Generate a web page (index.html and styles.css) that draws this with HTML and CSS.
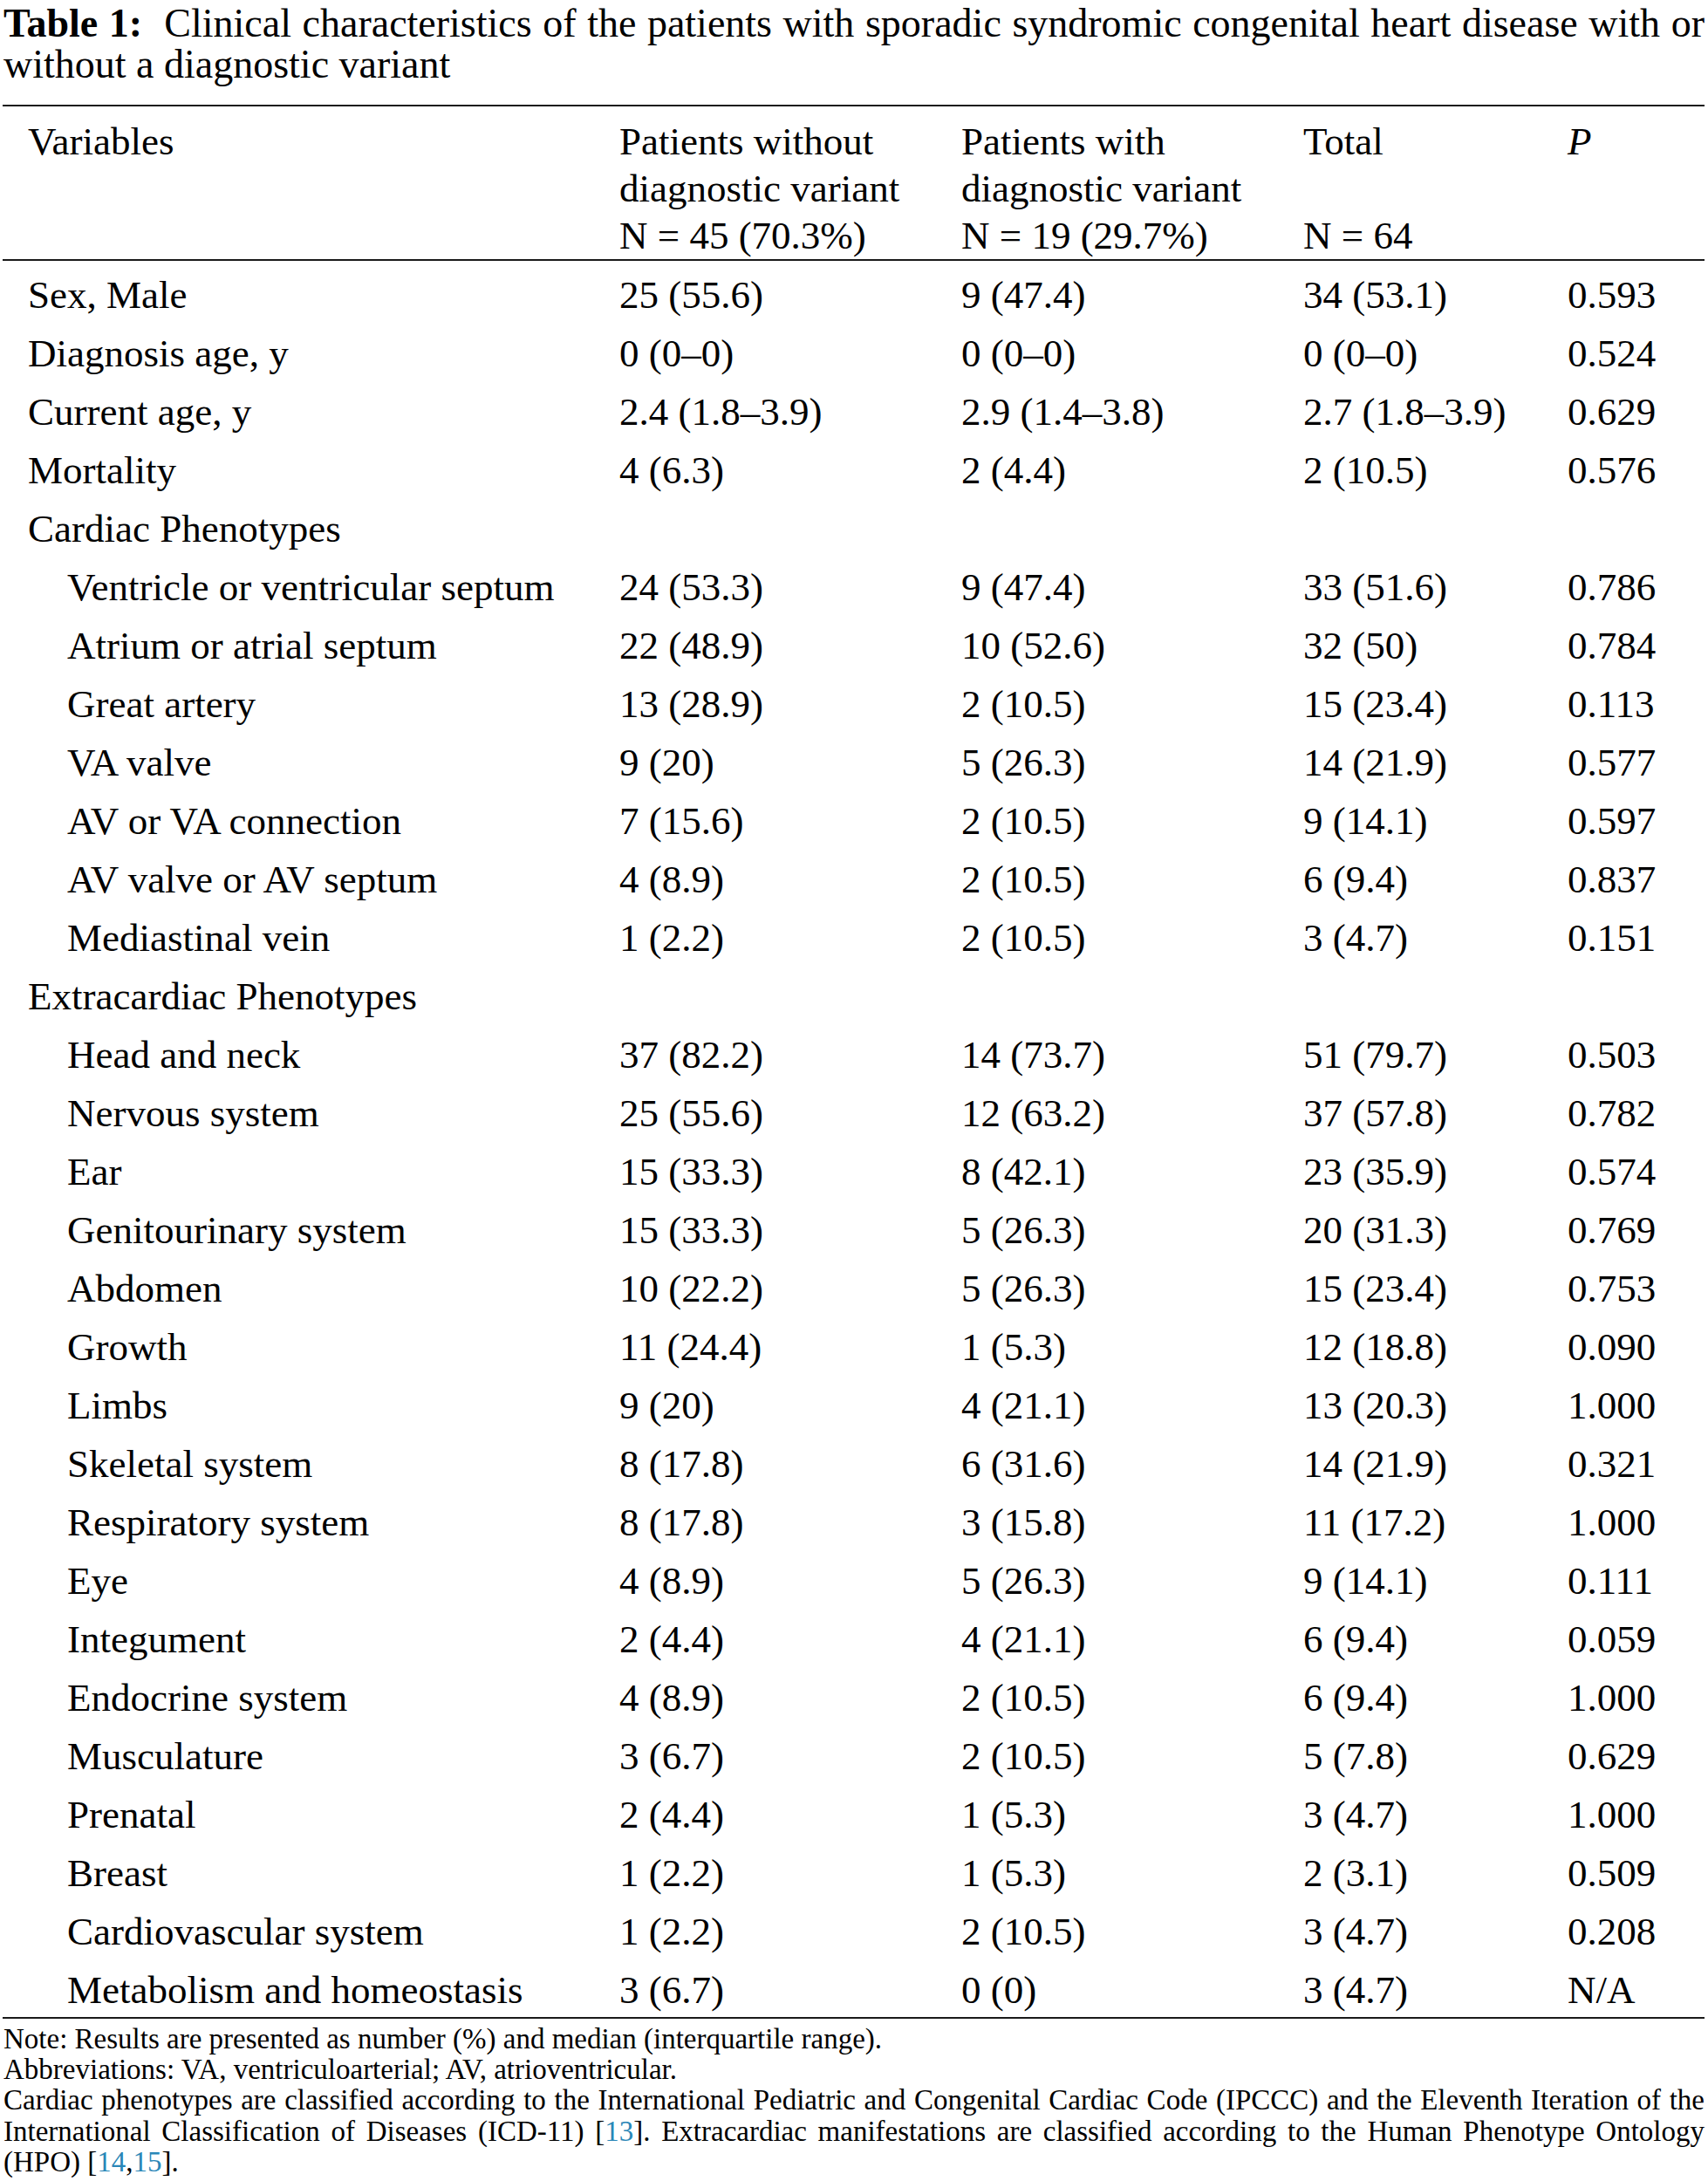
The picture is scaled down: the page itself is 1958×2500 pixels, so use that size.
FILE: index.html
```html
<!DOCTYPE html>
<html lang="en">
<head>
<meta charset="utf-8">
<title>Table 1</title>
<link rel="stylesheet" href="styles.css">
</head>
<body>
<div class="page">
  <p class="caption"><b class="label">Table 1:</b>&nbsp; Clinical characteristics of the patients with sporadic syndromic congenital heart disease with or without a diagnostic variant</p>
  <table class="data">
    <colgroup>
      <col class="c1"><col class="c2"><col class="c3"><col class="c4"><col class="c5">
    </colgroup>
    <thead>
      <tr>
        <th>Variables</th>
        <th>Patients without<br>diagnostic variant<br>N = 45 (70.3%)</th>
        <th>Patients with<br>diagnostic variant<br>N = 19 (29.7%)</th>
        <th>Total<br>&nbsp;<br>N = 64</th>
        <th><i>P</i></th>
      </tr>
    </thead>
    <tbody>
      <tr class="first"><td>Sex, Male</td><td>25 (55.6)</td><td>9 (47.4)</td><td>34 (53.1)</td><td>0.593</td></tr>
      <tr><td>Diagnosis age, y</td><td>0 (0–0)</td><td>0 (0–0)</td><td>0 (0–0)</td><td>0.524</td></tr>
      <tr><td>Current age, y</td><td>2.4 (1.8–3.9)</td><td>2.9 (1.4–3.8)</td><td>2.7 (1.8–3.9)</td><td>0.629</td></tr>
      <tr><td>Mortality</td><td>4 (6.3)</td><td>2 (4.4)</td><td>2 (10.5)</td><td>0.576</td></tr>
      <tr><td>Cardiac Phenotypes</td><td></td><td></td><td></td><td></td></tr>
      <tr><td class="sub">Ventricle or ventricular septum</td><td>24 (53.3)</td><td>9 (47.4)</td><td>33 (51.6)</td><td>0.786</td></tr>
      <tr><td class="sub">Atrium or atrial septum</td><td>22 (48.9)</td><td>10 (52.6)</td><td>32 (50)</td><td>0.784</td></tr>
      <tr><td class="sub">Great artery</td><td>13 (28.9)</td><td>2 (10.5)</td><td>15 (23.4)</td><td>0.113</td></tr>
      <tr><td class="sub">VA valve</td><td>9 (20)</td><td>5 (26.3)</td><td>14 (21.9)</td><td>0.577</td></tr>
      <tr><td class="sub">AV or VA connection</td><td>7 (15.6)</td><td>2 (10.5)</td><td>9 (14.1)</td><td>0.597</td></tr>
      <tr><td class="sub">AV valve or AV septum</td><td>4 (8.9)</td><td>2 (10.5)</td><td>6 (9.4)</td><td>0.837</td></tr>
      <tr><td class="sub">Mediastinal vein</td><td>1 (2.2)</td><td>2 (10.5)</td><td>3 (4.7)</td><td>0.151</td></tr>
      <tr><td>Extracardiac Phenotypes</td><td></td><td></td><td></td><td></td></tr>
      <tr><td class="sub">Head and neck</td><td>37 (82.2)</td><td>14 (73.7)</td><td>51 (79.7)</td><td>0.503</td></tr>
      <tr><td class="sub">Nervous system</td><td>25 (55.6)</td><td>12 (63.2)</td><td>37 (57.8)</td><td>0.782</td></tr>
      <tr><td class="sub">Ear</td><td>15 (33.3)</td><td>8 (42.1)</td><td>23 (35.9)</td><td>0.574</td></tr>
      <tr><td class="sub">Genitourinary system</td><td>15 (33.3)</td><td>5 (26.3)</td><td>20 (31.3)</td><td>0.769</td></tr>
      <tr><td class="sub">Abdomen</td><td>10 (22.2)</td><td>5 (26.3)</td><td>15 (23.4)</td><td>0.753</td></tr>
      <tr><td class="sub">Growth</td><td>11 (24.4)</td><td>1 (5.3)</td><td>12 (18.8)</td><td>0.090</td></tr>
      <tr><td class="sub">Limbs</td><td>9 (20)</td><td>4 (21.1)</td><td>13 (20.3)</td><td>1.000</td></tr>
      <tr><td class="sub">Skeletal system</td><td>8 (17.8)</td><td>6 (31.6)</td><td>14 (21.9)</td><td>0.321</td></tr>
      <tr><td class="sub">Respiratory system</td><td>8 (17.8)</td><td>3 (15.8)</td><td>11 (17.2)</td><td>1.000</td></tr>
      <tr><td class="sub">Eye</td><td>4 (8.9)</td><td>5 (26.3)</td><td>9 (14.1)</td><td>0.111</td></tr>
      <tr><td class="sub">Integument</td><td>2 (4.4)</td><td>4 (21.1)</td><td>6 (9.4)</td><td>0.059</td></tr>
      <tr><td class="sub">Endocrine system</td><td>4 (8.9)</td><td>2 (10.5)</td><td>6 (9.4)</td><td>1.000</td></tr>
      <tr><td class="sub">Musculature</td><td>3 (6.7)</td><td>2 (10.5)</td><td>5 (7.8)</td><td>0.629</td></tr>
      <tr><td class="sub">Prenatal</td><td>2 (4.4)</td><td>1 (5.3)</td><td>3 (4.7)</td><td>1.000</td></tr>
      <tr><td class="sub">Breast</td><td>1 (2.2)</td><td>1 (5.3)</td><td>2 (3.1)</td><td>0.509</td></tr>
      <tr><td class="sub">Cardiovascular system</td><td>1 (2.2)</td><td>2 (10.5)</td><td>3 (4.7)</td><td>0.208</td></tr>
      <tr class="last"><td class="sub">Metabolism and homeostasis</td><td>3 (6.7)</td><td>0 (0)</td><td>3 (4.7)</td><td>N/A</td></tr>
    </tbody>
  </table>
  <div class="notes">
    <p>Note: Results are presented as number (%) and median (interquartile range).</p>
    <p>Abbreviations: VA, ventriculoarterial; AV, atrioventricular.</p>
    <p class="just">Cardiac phenotypes are classified according to the International Pediatric and Congenital Cardiac Code (IPCCC) and the Eleventh Iteration of the International Classification of Diseases (ICD-11) [<a class="ref" href="#r13">13</a>]. Extracardiac manifestations are classified according to the Human Phenotype Ontology (HPO) [<a class="ref" href="#r14">14</a>,<a class="ref" href="#r15">15</a>].</p>
  </div>
</div>
</body>
</html>
```
FILE: styles.css
```css
html, body {
  margin: 0;
  padding: 0;
  background: #ffffff;
}

body {
  font-family: "Liberation Serif", "Times New Roman", serif;
  color: #000000;
}

.page {
  width: 1951px;
  margin-left: 3px;
}

.caption {
  margin: 3px 0 0 0;
  padding-left: 1px;
  font-size: 46px;
  line-height: 47px;
  text-align: justify;
}

.caption .label {
  font-weight: bold;
}

.data {
  margin-top: 23px;
  width: 1951px;
  table-layout: fixed;
  border-collapse: separate;
  border-spacing: 0;
  font-size: 45px;
}

.c1 { width: 678px; }
.c2 { width: 392px; }
.c3 { width: 392px; }
.c4 { width: 303px; }
.c5 { width: 186px; }

.data th {
  font-weight: normal;
  text-align: left;
  vertical-align: top;
  line-height: 54px;
  padding: 13px 0 0 29px;
  border-top: 2px solid #1a1a1a;
  border-bottom: 2px solid #1a1a1a;
  white-space: nowrap;
}

.data td {
  text-align: left;
  vertical-align: top;
  line-height: 54px;
  padding: 9px 0 4px 29px;
  white-space: nowrap;
}

.data tr.first td {
  padding-top: 12px;
}

.data tr.last td {
  border-bottom: 2px solid #1a1a1a;
}

.data td.sub {
  padding-left: 74px;
}

.notes {
  margin-top: 6px;
  padding-left: 1px;
  font-size: 33px;
  line-height: 35.2px;
}

.notes p {
  margin: 0;
}

.notes .just {
  text-align: justify;
}

.ref {
  color: #2a87b8;
  text-decoration: none;
}
```
